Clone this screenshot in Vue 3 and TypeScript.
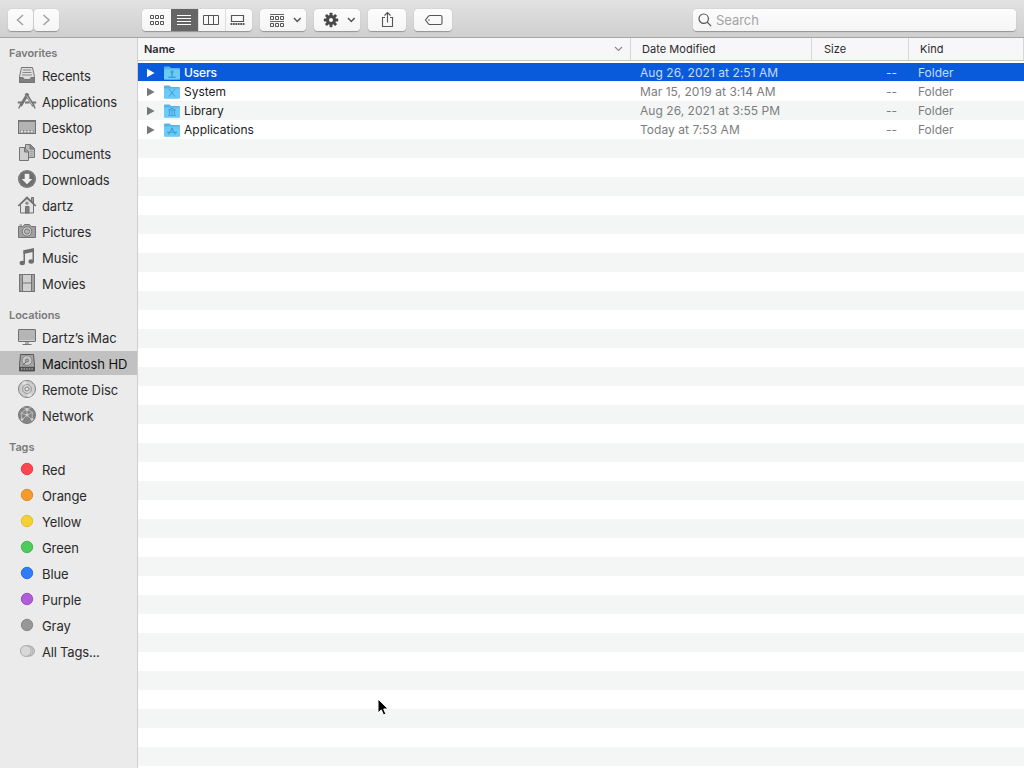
<script setup lang="ts">
interface SideItem { label: string; icon: string; cls?: string }
interface TagItem { label: string; color: string; edge: string }
interface FileRow { name: string; date: string; glyph: string; selected?: boolean }

const favorites: SideItem[] = [
  { label: 'Recents', icon: 'recents' },
  { label: 'Applications', icon: 'apps' },
  { label: 'Desktop', icon: 'desktop' },
  { label: 'Documents', icon: 'documents' },
  { label: 'Downloads', icon: 'downloads' },
  { label: 'dartz', icon: 'home' },
  { label: 'Pictures', icon: 'pictures' },
  { label: 'Music', icon: 'music' },
  { label: 'Movies', icon: 'movies' },
]
const locations: SideItem[] = [
  { label: 'Dartz’s iMac', icon: 'imac' },
  { label: 'Macintosh HD', icon: 'disk', cls: 'active' },
  { label: 'Remote Disc', icon: 'disc' },
  { label: 'Network', icon: 'network' },
]
const groups = [
  { title: 'Favorites', items: favorites },
  { title: 'Locations', items: locations },
]
const tags: TagItem[] = [
  { label: 'Red', color: '#fc4650', edge: '#e0383f' },
  { label: 'Orange', color: '#f59b2e', edge: '#dc8420' },
  { label: 'Yellow', color: '#f4d133', edge: '#dcb922' },
  { label: 'Green', color: '#4ecb5c', edge: '#3bb248' },
  { label: 'Blue', color: '#2f7cf6', edge: '#1f66dc' },
  { label: 'Purple', color: '#b05cdc', edge: '#9645c2' },
  { label: 'Gray', color: '#979797', edge: '#828282' },
]
const files: FileRow[] = [
  { name: 'Users', date: 'Aug 26, 2021 at 2:51 AM', glyph: 'users', selected: true },
  { name: 'System', date: 'Mar 15, 2019 at 3:14 AM', glyph: 'system' },
  { name: 'Library', date: 'Aug 26, 2021 at 3:55 PM', glyph: 'library' },
  { name: 'Applications', date: 'Today at 7:53 AM', glyph: 'apps' },
]
const teeth = [0, 45, 90, 135, 180, 225, 270, 315]
</script>

<template>
  <div class="finder">
    <header class="toolbar">
      <div class="nav">
        <button class="btn"><svg width="25" height="22" viewBox="0 0 25 22"><path d="M15 6 9.500 11l5.500 5" fill="none" stroke="#a2a2a2" stroke-width="1.500" /></svg></button>
        <button class="btn"><svg width="25" height="22" viewBox="0 0 25 22"><path d="m9.500 6 5.500 5-5.500 5" fill="none" stroke="#a2a2a2" stroke-width="1.500" /></svg></button>
      </div>

      <div class="segments">
        <span class="seg first">
          <svg width="16" height="12" viewBox="0 0 16 12" fill="none" stroke="#555">
            <path d="M1.500 1.500h3v3h-3zM6.500 1.500h3v3h-3zM11.500 1.500h3v3h-3zM1.500 7.500h3v3h-3zM6.500 7.500h3v3h-3zM11.500 7.500h3v3h-3z" />
          </svg>
        </span>
        <span class="seg on">
          <svg width="16" height="12" viewBox="0 0 16 12"><path d="M1 1.500h14M1 4.500h14M1 7.500h14M1 10.500h14" stroke="#fff" /></svg>
        </span>
        <span class="seg">
          <svg width="16" height="12" viewBox="0 0 16 12"><path d="M.5 1.500h15v9H.5zM5.500 1.500v9M10.500 1.500v9" fill="none" stroke="#555" /></svg>
        </span>
        <span class="seg">
          <svg width="16" height="12" viewBox="0 0 16 12"><path d="M1.500 1.500h12v6h-12z" fill="none" stroke="#555" stroke-width="1.200" /><path d="M.5 10h14" stroke="#555" stroke-width="1.800" stroke-dasharray="1.800 .64" /></svg>
        </span>
      </div>

      <div class="btn menu">
        <svg width="46" height="22" viewBox="0 0 46 22" fill="none" stroke="#555">
          <path d="M10 5.500h14M10 12.500h14" stroke-width=".9" />
          <path d="M10.500 7.500h3v3h-3zM15.500 7.500h3v3h-3zM20.500 7.500h3v3h-3zM10.500 14.500h3v3h-3zM15.500 14.500h3v3h-3zM20.500 14.500h3v3h-3z" />
          <path d="m34 9 3.300 3.500L40.600 9" stroke-width="1.500" />
        </svg>
      </div>
      <div class="btn menu">
        <svg width="46" height="22" viewBox="0 0 46 22">
          <g transform="translate(17 11)" fill="#484848">
            <rect v-for="a in teeth" :key="a" x="-1.400" y="-7.200" width="2.800" height="4" rx=".4" :transform="`rotate(${a})`" />
            <circle r="5" />
            <circle r="2" fill="#f9f9f9" />
          </g>
          <path d="m34 9 3.300 3.500L40.600 9" fill="none" stroke="#555" stroke-width="1.500" />
        </svg>
      </div>
      <div class="btn wide">
        <svg width="38" height="22" viewBox="0 0 38 22" fill="none" stroke="#555" stroke-width="1.100">
          <path d="M17 8.500h-2.500v9h10v-9H22M19.500 13.500V4M16.500 6.500l3-3 3 3" />
        </svg>
      </div>
      <div class="btn wide">
        <svg width="38" height="22" viewBox="0 0 38 22" fill="none" stroke="#555" stroke-width="1.100">
          <path d="M16 6.500h10.500q1.500 0 1.500 1.500v6q0 1.500-1.500 1.500H16q-.8 0-1.500-.7L11.500 11l3-3.800q.7-.7 1.500-.7z" />
          <circle cx="15" cy="11" r=".8" fill="#555" stroke="none" />
        </svg>
      </div>
      <div class="search">
        <svg width="14" height="14" viewBox="0 0 14 14" fill="none" stroke="#555" stroke-width="1.200"><circle cx="5.700" cy="5.700" r="4.700" /><path d="m9.200 9.200 4 4" /></svg>
        <span>Search</span>
      </div>
    </header>

    <div class="body">
      <aside class="sidebar">
        <section v-for="g in groups" :key="g.title">
          <h2>{{ g.title }}</h2>
          <div v-for="it in g.items" :key="it.label" class="item" :class="it.cls">
            <svg class="ico" width="20" height="20" viewBox="0 0 20 20">
              <g v-if="it.icon === 'recents'" stroke="#747474" fill="none">
                <path d="M4.500 2.500h11l2 9v6h-15v-6z" fill="#dedede" />
                <path d="M6 5h8M5.500 7.500h9M5 10h10" stroke="#888" />
                <path d="M2.500 12.500h3.500l1.500 2h5l1.500-2h3.500v5h-15z" fill="#808080" />
              </g>
              <g v-else-if="it.icon === 'apps'" fill="none" stroke="#747474">
                <path d="M11 2.500 3.500 15" stroke-width="2.800" />
                <path d="m8.800 2.500 7.700 12.500" stroke-width="2.800" />
                <path d="m9.500 4.500 6 9.700" stroke="#d0d0d0" stroke-width=".8" />
                <path d="M.8 11.500H6M8 11.500h4.500M15 11.500h4.200" stroke-width="2" />
                <path d="m3.200 14.500-1.500 3M16.500 14l1.600 3.500" stroke-width="1.400" />
              </g>
              <g v-else-if="it.icon === 'desktop'">
                <rect x="1.500" y="3.500" width="17" height="13" fill="#b3b3b3" stroke="#727272" />
                <path d="M2 4.500h16" stroke="#7c7c7c" />
                <path d="M3.500 14.500h13" stroke="#808080" stroke-width="3" />
                <path d="M4 14.500h12" stroke="#ececec" stroke-width="2" stroke-dasharray="2.200 1" />
              </g>
              <g v-else-if="it.icon === 'documents'" stroke="#747474">
                <path d="M8.500 1.500h5l4 4v9h-9z" fill="#bcbcbc" />
                <path d="M13 1.500V6h4.500" fill="#888" />
                <path d="M2.500 4.500h5l4 4v9h-9z" fill="#cecece" />
                <path d="M7.500 4.500V9h4" fill="#999" />
                <path d="M13 8.500h3M13 10.500h3M13 12.500h3" stroke="#999" stroke-width=".7" />
              </g>
              <g v-else-if="it.icon === 'downloads'">
                <circle cx="10" cy="10" r="9" fill="#6f6f6f" />
                <circle cx="10" cy="10" r="7.800" fill="none" stroke="#858585" stroke-width=".7" />
                <path d="M7.700 4.800h4.600v5.200h3l-5.300 5.300L4.700 10h3z" fill="#f0f0f0" />
              </g>
              <g v-else-if="it.icon === 'home'" stroke="#707070">
                <path d="M14.500 7V2.500h2V9" fill="#999" />
                <path d="M3.500 9.500 10 3.500l6.500 6v8.500h-13z" fill="#e4e4e4" />
                <path d="m1.200 11 8.800-8.500 8.800 8.500" fill="none" stroke-width="1.700" />
                <path d="M8.500 11.500h3.500v6.500H8.500z" fill="#808080" />
                <circle cx="10" cy="8.200" r="1.200" fill="#aaa" stroke-width=".8" />
              </g>
              <g v-else-if="it.icon === 'pictures'" stroke="#747474">
                <path d="M1.500 5.500h4.500l1.500-2h5l1.500 2h4.500v11h-17z" fill="#a0a0a0" />
                <path d="M2.500 4h2.500" />
                <circle cx="10" cy="10.500" r="4.700" fill="#cfcfcf" />
                <circle cx="10" cy="10.500" r="2.600" fill="#b4b4b4" />
              </g>
              <g v-else-if="it.icon === 'music'" fill="#6f6f6f">
                <path d="M6.500 3.200 17 1v3.800L6.500 7z" />
                <path d="M6.500 3.200H8V16H6.500zM15.500 2H17v12.500h-1.500z" />
                <ellipse cx="5.300" cy="16" rx="2.700" ry="2.200" /><ellipse cx="14.200" cy="14.500" rx="2.700" ry="2.200" />
              </g>
              <g v-else-if="it.icon === 'movies'">
                <rect x="2.500" y="1.500" width="15" height="17" fill="#d0d0d0" stroke="#747474" />
                <path d="M5.500 2v16M14.500 2v16M5.500 10h9" stroke="#747474" />
                <path d="M4 2.500v16M16 2.500v16" stroke="#747474" stroke-width="2" stroke-dasharray="1 1" />
              </g>
              <g v-else-if="it.icon === 'imac'">
                <rect x="1.500" y="2.500" width="17" height="12" rx=".5" fill="#b5b5b5" stroke="#6f6f6f" />
                <path d="M2 13.500h16" stroke="#d0d0d0" />
                <path d="M8 15h4v2h-4z" fill="#aaa" /><path d="M5.500 17.500h9" stroke="#777" />
              </g>
              <g v-else-if="it.icon === 'disk'">
                <path d="M3.500 1.500h13l1 11v5.500h-15v-5.500z" fill="#a4a4a4" stroke="#585858" />
                <circle cx="10" cy="7.500" r="4.900" fill="#c6c6c6" stroke="#7a7a7a" stroke-width=".8" />
                <circle cx="10" cy="7.500" r="1.600" fill="#aaa" stroke="#6a6a6a" stroke-width=".8" />
                <path d="m6 12 3-3" stroke="#666" />
                <path d="M2.500 13.800h15v4.200h-15z" fill="#505050" /><path d="M4 16h12" stroke="#aaa" stroke-width="1.400" stroke-dasharray="1.400 1.200" />
              </g>
              <g v-else-if="it.icon === 'disc'" fill="none" stroke="#808080">
                <circle cx="10" cy="10" r="8.500" fill="#cecece" />
                <path d="m10 10-5-6.500 4-1.700zM10 10l5 6.500-4 1.700z" fill="#e3e3e3" stroke="none" />
                <circle cx="10" cy="10" r="4.500" stroke="#8c8c8c" stroke-width=".8" />
                <circle cx="10" cy="10" r="2" fill="#eaeaea" />
              </g>
              <g v-else fill="none" stroke="#c4c4c4">
                <circle cx="10" cy="10" r="8.500" fill="#848484" stroke="#777" />
                <path d="M10 4 4 8M10 4l5.500 3.500M10 4v6M10 10l-5 5M10 10l5 5M4 8l1 7M15.500 7.500 15 15M4 8l6 2 5.500-2.500M10 4 6 2.500M10 4l4-1.500" stroke-width=".8" />
                <g fill="#cfcfcf" stroke="none"><circle cx="10" cy="4.500" r="1.500" /><circle cx="10" cy="10" r="1.500" /><circle cx="5" cy="14.500" r="1.300" /><circle cx="15" cy="14.500" r="1.300" /></g>
              </g>
            </svg>
            <span :class="{ loose: it.icon === 'apps' }">{{ it.label }}</span>
          </div>
        </section>
        <section>
          <h2>Tags</h2>
          <div v-for="t in tags" :key="t.label" class="item">
            <svg class="ico" width="20" height="20" viewBox="0 0 20 20"><circle cx="10" cy="10" r="5.700" :fill="t.color" :stroke="t.edge" stroke-width=".9" /></svg>
            <span>{{ t.label }}</span>
          </div>
          <div class="item tight">
            <svg class="ico" width="20" height="20" viewBox="0 0 20 20" fill="#d8d8d8" stroke="#a5a5a5" stroke-width=".9"><circle cx="12.500" cy="10" r="5" /><circle cx="10.800" cy="10" r="5.200" /><circle cx="8.800" cy="10" r="5.400" /></svg>
            <span>All Tags...</span>
          </div>
        </section>
      </aside>

      <main class="list">
        <div class="head cols">
          <div class="c-name"><b>Name</b><svg width="9" height="6" viewBox="0 0 9 6"><path d="m1 1 3.500 3.500L8 1" fill="none" stroke="#888" stroke-width="1.100" /></svg></div>
          <div class="c-date">Date Modified</div>
          <div class="c-size">Size</div>
          <div class="c-kind">Kind</div>
        </div>
        <div class="rows">
          <div v-for="f in files" :key="f.name" class="row cols" :class="{ selected: f.selected }">
            <div class="r-name">
              <svg class="tri" width="8" height="10" viewBox="0 0 8 10"><path d="M0 .8 7.600 5 0 9.200z" fill="currentColor" /></svg>
              <svg class="folder" width="16" height="14" viewBox="0 0 16 14">
                <path d="M0 1.500Q0 .5 1 .5h4.500l1.500 1.500H15q1 0 1 1v9.500q0 1-1 1H1q-1 0-1-1z" fill="#56b4e4" />
                <path d="M0 3.500h16v9q0 1-1 1H1q-1 0-1-1z" fill="#6ccaf8" />
                <g fill="none" stroke="#3f9fd2" stroke-width="1">
                  <g v-if="f.glyph === 'users'"><circle cx="8" cy="6" r="1.200" fill="#3f9fd2" /><path d="M8 7v3.500M4.500 11.200h7" stroke-width="1.400" /></g>
                  <path v-else-if="f.glyph === 'system'" d="m5 4 6 7.500M11 4l-6 7.500" />
                  <path v-else-if="f.glyph === 'library'" d="M4.500 6.200 8 4.200l3.500 2zM5.500 7v3.500M8 7v3.500M10.500 7v3.500M4 11.300h8" />
                  <path v-else d="M8.700 4.800 4.500 11.500M7.300 4.800l4.200 6.700M3 9.300h3.300M7.200 9.300h2M10.200 9.300H13" stroke-width="1.200" />
                </g>
              </svg>
              <span>{{ f.name }}</span>
            </div>
            <div class="r-date">{{ f.date }}</div>
            <div class="r-size">--</div>
            <div class="r-kind">Folder</div>
          </div>
        </div>
      </main>
    </div>

    <svg class="cursor" width="13" height="19" viewBox="0 0 13 19"><path d="M1 1v14l3.300-3.100L6.500 17l2.400-1-2.200-5h4.500z" fill="#000" stroke="#fff" /></svg>
  </div>
</template>

<style>
body { margin: 0; overflow: hidden; }
</style>

<style scoped>
.finder { width: 1024px; height: 768px; display: flex; flex-direction: column; position: relative; overflow: hidden; font: 13px/19px Inter, "Liberation Sans", sans-serif; color: #2a2a2a; background: #fff; }
svg { display: block; flex: none; }
.toolbar { box-sizing: border-box; height: 38px; flex: none; display: flex; align-items: flex-start; padding: 9px 8px 0; background: linear-gradient(#e2e2e2, #cfcfcf); border-bottom: 1px solid #a6a6a6; }
.btn, .segments, .search { box-sizing: border-box; height: 22px; background: linear-gradient(#fcfcfc, #f5f5f5); border: 0; border-radius: 4px; box-shadow: 0 .5px 1px rgba(0, 0, 0, .3); padding: 0; }
.nav { display: flex; width: 51px; gap: 1px; margin-right: 83px; }
.nav .btn { width: 25px; }
.segments { display: flex; width: 110px; margin-right: 8px; overflow: hidden; }
.seg { display: flex; align-items: center; justify-content: center; box-sizing: border-box; width: 27px; border-left: 1px solid #ddd; padding-right: 2px; }
.seg.first { width: 29px; border: 0; padding: 0; }
.seg.on { background: #666; border: 0; }
.menu { width: 46px; margin-right: 8px; }
.wide { width: 38px; margin-right: 8px; }
.search { width: 323px; margin-left: auto; display: flex; align-items: center; padding-left: 5px; gap: 4px; color: #a4a4a4; letter-spacing: -.05px; }
.search span { padding-top: 1px; }
.body { flex: 1; min-height: 0; display: flex; }
.sidebar { box-sizing: border-box; width: 138px; flex: none; background: #ebebeb; border-right: 1px solid #cfcfcf; }
h2 { margin: 0; padding: 10px 0 0 9px; height: 18px; font-size: 11px; line-height: 18px; font-weight: 600; letter-spacing: -.08px; color: #7a7a7a; }
section:first-child h2 { padding-top: 6px; }
.item { box-sizing: border-box; height: 26px; display: flex; align-items: center; padding-left: 17px; gap: 5px; white-space: nowrap; letter-spacing: -.1px; }
.item span { padding-top: 2px; }
.item .loose { letter-spacing: -.05px; }
.item.tight { letter-spacing: -.2px; }
.item.active { height: 24px; margin: 1px 0; background: #c1c1c1; color: #111; }
.list { flex: 1; min-width: 0; display: flex; flex-direction: column; }
.cols { display: grid; grid-template-columns: 493px 181px 97px 1fr; }
.head { box-sizing: border-box; height: 23px; flex: none; background: #f7f7f9; border-bottom: 1px solid #c9c9c9; font-size: 11px; line-height: 22px; }
.head > div { height: 22px; box-sizing: border-box; border-right: 1px solid #d6d6d6; padding-left: 11px; }
.head .c-size { padding-left: 12px; }
.head .c-name { display: flex; align-items: center; justify-content: space-between; padding: 0 7px 0 6px; }
.head .c-date { letter-spacing: .05px; }
.c-name b { font-weight: 600; }
.rows { flex: 1; margin-top: 2px; background: repeating-linear-gradient(#f4f6f6 0 19px, #fff 19px 38px); }
.row { height: 19px; font-size: 12px; color: #7d7d7d; white-space: nowrap; }
.r-name { display: flex; align-items: center; padding-left: 9px; color: #222; }
.tri { color: #777; margin-right: 9px; }
.folder { margin-right: 4px; }
.r-date { padding-left: 9px; letter-spacing: .04px; }
.r-size { text-align: right; padding-right: 12px; }
.r-kind { padding-left: 9px; }
.row.selected { height: 18px; margin-bottom: 1px; background: #0a5bdc; color: #c5dbfa; }
.selected .r-name { color: #fff; font-weight: 500; letter-spacing: -.15px; }
.selected .tri { color: #fff; }
.cursor { position: absolute; left: 377px; top: 698px; }
</style>
